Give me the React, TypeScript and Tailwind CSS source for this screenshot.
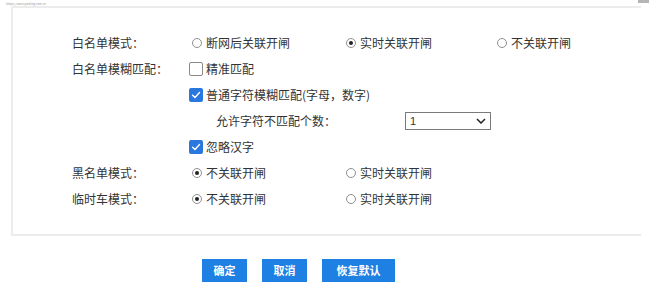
import React from "react";

const FONT = { fontFamily: '"Noto Sans CJK SC", "Noto Sans", sans-serif' };

function Radio({ checked, label, className = "" }: { checked?: boolean; label: string; className?: string }) {
  return (
    <div className={`flex items-center ${className}`}>
      <span className="ml-[3px] mr-[4px] flex h-[10px] w-[10px] items-center justify-center rounded-full border border-[#8f8f8f] bg-white">
        {checked ? <span className="h-[4px] w-[4px] rounded-full bg-[#222]" /> : null}
      </span>
      <span>{label}</span>
    </div>
  );
}

function Checkbox({ checked, label }: { checked?: boolean; label: string }) {
  return (
    <div className="flex items-center">
      {checked ? (
        <span className="mr-[3px] flex h-[14px] w-[14px] items-center justify-center rounded-[2px] bg-[#2a78dd]">
          <svg width="10" height="10" viewBox="0 0 10 10" fill="none">
            <path d="M1.6 5.2 L4 7.4 L8.5 2.6" stroke="white" strokeWidth="1.4" strokeLinecap="round" strokeLinejoin="round" />
          </svg>
        </span>
      ) : (
        <span className="mr-[3px] h-[14px] w-[14px] rounded-[2px] border border-[#8a8a8a] bg-white" />
      )}
      <span>{label}</span>
    </div>
  );
}

function Row({ label, children }: { label?: string; children: React.ReactNode }) {
  return (
    <div className="flex h-[26px] items-center">
      <div className="w-[117px] shrink-0">{label}</div>
      <div className="flex items-center">{children}</div>
    </div>
  );
}

export default function App() {
  return (
    <div className="h-[300px] w-[649px] overflow-hidden bg-white text-[12px] leading-none text-[#333]" style={FONT}>
      <div className="flex h-[6px] items-start justify-between">
        <span className="ml-[6px] mt-[3px] text-[3px] leading-[3px] text-[#999]">https://www.parking.com.cn</span>
        <span className="h-[3px] w-[11px] bg-[#b5b5b5]" />
      </div>
      <div className="ml-[11px] h-[230px] w-[630px] border-b-2 border-l-2 border-t-2 border-[#ececec] pl-[59px] pt-[22px]">
        <Row label="白名单模式：">
          <Radio label="断网后关联开闸" className="w-[154px]" />
          <Radio checked label="实时关联开闸" className="w-[151px]" />
          <Radio label="不关联开闸" />
        </Row>
        <Row label="白名单模糊匹配：">
          <Checkbox label="精准匹配" />
        </Row>
        <Row>
          <Checkbox checked label="普通字符模糊匹配(字母，数字)" />
        </Row>
        <Row>
          <span className="ml-[27px] w-[189px]">允许字符不匹配个数：</span>
          <div className="flex h-[18px] w-[86px] items-center justify-between border border-[#7a7a7a] pl-[4px] pr-[4px] text-[11px]" style={{ fontFamily: '"Liberation Sans", sans-serif' }}>
            <span>1</span>
            <svg width="10" height="6" viewBox="0 0 10 6" fill="none">
              <path d="M1 1 L5 5 L9 1" stroke="#222" strokeWidth="1.5" />
            </svg>
          </div>
        </Row>
        <Row>
          <Checkbox checked label="忽略汉字" />
        </Row>
        <Row label="黑名单模式：">
          <Radio checked label="不关联开闸" className="w-[154px]" />
          <Radio label="实时关联开闸" />
        </Row>
        <Row label="临时车模式：">
          <Radio checked label="不关联开闸" className="w-[154px]" />
          <Radio label="实时关联开闸" />
        </Row>
      </div>
      <div className="flex gap-[15px] pl-[202px] pt-[23px]">
        <button className="h-[23px] w-[45px] bg-[#1f80e4] text-[11px] font-bold text-white">确定</button>
        <button className="h-[23px] w-[45px] bg-[#1f80e4] text-[11px] font-bold text-white">取消</button>
        <button className="h-[23px] w-[73px] bg-[#1f80e4] text-[11px] font-bold text-white">恢复默认</button>
      </div>
    </div>
  );
}
